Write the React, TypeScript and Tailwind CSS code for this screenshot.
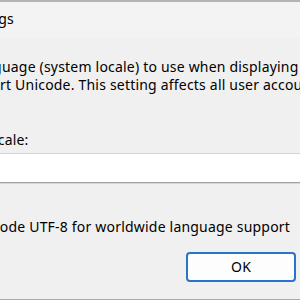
export default function App() {
  return (
    <div className="w-[300px] h-[300px] overflow-hidden bg-[#f0f0f0] flex flex-col font-['Noto_Sans',sans-serif] text-[14px] tracking-[0.2px] text-black">
      {/* title bar */}
      <div className="h-[38px] shrink-0 border-t-2 border-[#b3b3b3] bg-[#f3f3f3] pb-[3px] flex items-center whitespace-nowrap leading-[20px]">
        <div className="ml-[-92px] flex items-center">
          <span>Region Settings</span>
        </div>
      </div>

      <div className="flex-1 flex flex-col pt-[19.5px] leading-[18.5px] whitespace-nowrap">
        <p className="ml-[-115px]">Select which language (system locale) to use when displaying</p>
        <p className="ml-[-42px]">support Unicode. This setting affects all user accounts on the computer.</p>

        <label className="mt-[36px] ml-[-122px]">Current system locale:</label>
        <div className="mt-[4px] h-[30px] shrink-0 bg-white border-t border-[#d4d4d4] border-b border-b-[#a3a3a3] shadow-[0_1px_0_#d6d6d6]" />

        <div className="mt-[34.5px] ml-[-124px] flex items-center gap-[8px]">
          <span className="w-[18px] h-[18px] shrink-0 rounded-[3px] border border-[#8a8a8a] bg-white" />
          <span>Beta: Use Unicode UTF-8 for worldwide language support</span>
        </div>

        <div className="mt-[16px] pl-[186px] flex gap-[8px]">
          <button className="w-[110px] h-[30px] shrink-0 rounded-[4px] border-2 border-[#2a74c8] bg-[#fdfdfd] text-[14px] leading-none">
            OK
          </button>
          <button className="w-[110px] h-[30px] shrink-0 rounded-[4px] border border-[#d0d0d0] bg-[#fdfdfd] text-[14px] leading-none">
            Cancel
          </button>
        </div>

        <div className="mt-auto h-px shrink-0 bg-[#a8a8a8]" />
      </div>
    </div>
  );
}
